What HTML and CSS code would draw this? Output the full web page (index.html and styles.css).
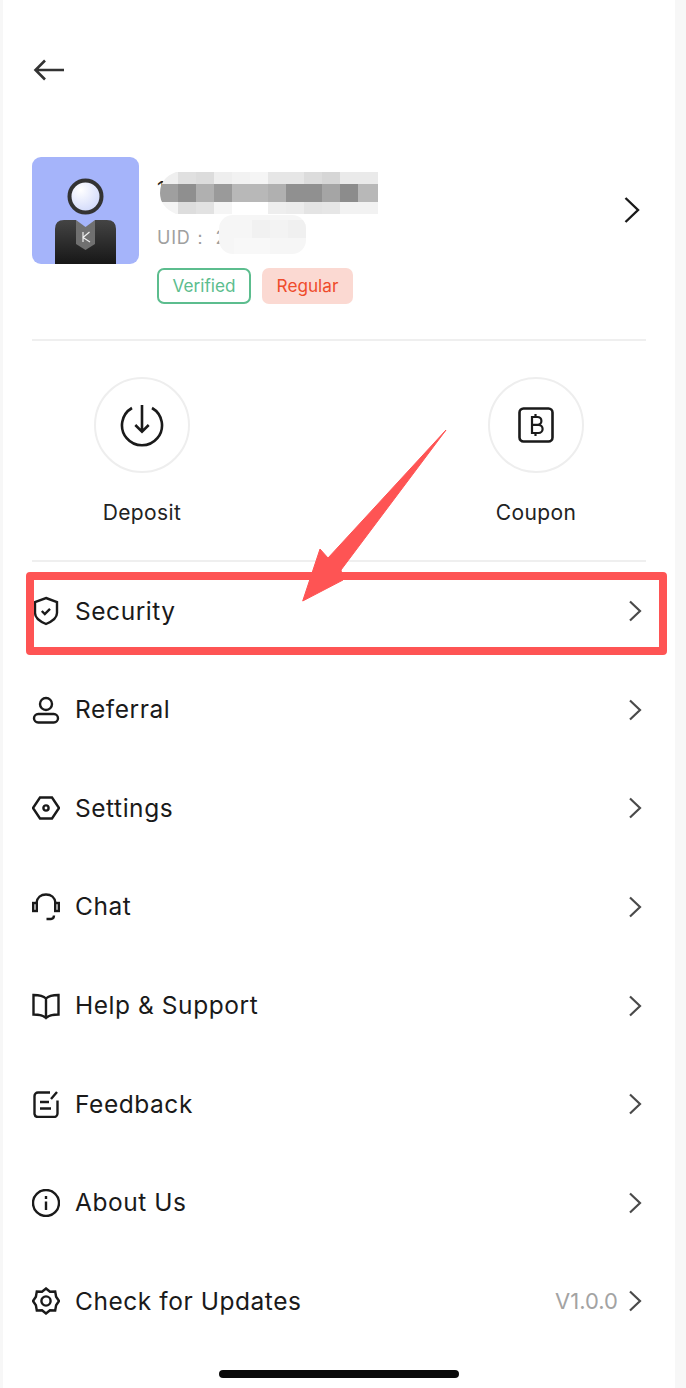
FILE: index.html
```html
<!DOCTYPE html>
<html lang="en">
<head>
<meta charset="utf-8">
<title>Profile</title>
<link rel="stylesheet" href="styles.css">
</head>
<body>
<main class="panel">
  <header class="topbar">
    <svg class="back" width="32" height="24" viewBox="0 0 32 24"><path d="M32 12H4M13 2.500 3.500 12l9.500 9.500"/></svg>
  </header>

  <section class="profile">
    <svg class="avatar" width="107" height="107" viewBox="0 0 107 107">
      <defs>
        <linearGradient id="suit" x1="0" y1="0" x2="0" y2="1"><stop offset="0" stop-color="#444"/><stop offset="1" stop-color="#171717"/></linearGradient>
        <radialGradient id="face" cx=".35" cy=".3" r=".8"><stop offset="0" stop-color="#fff"/><stop offset="1" stop-color="#ccd5fa"/></radialGradient>
      </defs>
      <rect width="107" height="107" rx="9" fill="#a5b4fa"/>
      <circle cx="53.500" cy="39.500" r="16" fill="url(#face)" stroke="#333" stroke-width="4"/>
      <path d="M23 107V72q0-9 9-9h43q9 0 9 9v35z" fill="url(#suit)"/>
      <path d="M44 63h19v24l-9.500 6-9.500-6z" fill="#707070"/>
      <path d="M44 63l9.500 7 9.500-7z" fill="#a5b4fa"/>
      <path d="M51 75v10M57.500 75 51 80.500 58 85" fill="none" stroke="#eee" stroke-width="1.200"/>
    </svg>
    <div class="identity">
      <div class="name-mask">1</div>
      <div class="uid">UID：<span class="uid-value">2</span></div>
      <div class="badges">
        <span class="badge badge-verified">Verified</span>
        <span class="badge badge-regular">Regular</span>
      </div>
    </div>
    <svg class="chev-big" width="18" height="28" viewBox="0 0 18 28"><path d="M2.500 2 15 14 2.500 26"/></svg>
  </section>

  <section class="actions">
    <div class="action">
      <div class="circle">
        <svg class="ico-action" width="44" height="44" viewBox="0 0 44 44"><path d="M12 5a20 20 0 1 0 20 0M22 2v26.600M15.300 22l6.700 6.600 6.700-6.600"/></svg>
      </div>
      <span class="action-label">Deposit</span>
    </div>
    <div class="action">
      <div class="circle">
        <svg class="ico-action" width="38" height="38" viewBox="0 0 38 38"><rect x="2.500" y="2.500" width="33" height="33" rx="4"/><path d="M15 11h5.500a3.800 3.800 0 0 1 0 7.800H15h6.500a4 4 0 0 1 0 8.200H15zM15 11v16M18.500 8v3M18.500 27v3" stroke-width="2.200"/></svg>
      </div>
      <span class="action-label">Coupon</span>
    </div>
  </section>

  <nav class="menu">
    <a class="row">
      <svg class="ico" width="28" height="30" viewBox="0 0 28 30"><path d="M14 2 25 6v11c0 5-5 8.500-11 11C8 25.500 3 22 3 17V6z"/><path d="M9.800 15l3 3 5.200-5.200"/></svg>
      <span class="label">Security</span>
      <svg class="chev" width="14" height="22" viewBox="0 0 14 22"><path d="M2 1.500 12 11 2 20.500"/></svg>
    </a>
    <a class="row">
      <svg class="ico" width="28" height="28" viewBox="0 0 28 28"><circle cx="14" cy="8" r="6"/><rect x="2" y="18" width="24" height="8.500" rx="4.200"/></svg>
      <span class="label">Referral</span>
      <svg class="chev" width="14" height="22" viewBox="0 0 14 22"><path d="M2 1.500 12 11 2 20.500"/></svg>
    </a>
    <a class="row">
      <svg class="ico" width="28" height="28" viewBox="0 0 28 28"><path d="M8 3.500h12L27 14l-7 10.500H8L1 14z"/><circle cx="14" cy="14" r="2.600"/></svg>
      <span class="label">Settings</span>
      <svg class="chev" width="14" height="22" viewBox="0 0 14 22"><path d="M2 1.500 12 11 2 20.500"/></svg>
    </a>
    <a class="row">
      <svg class="ico" width="28" height="28" viewBox="0 0 28 28"><path d="M4.500 10C5 4.500 9 1.500 14 1.500S23 4.500 23.500 10M14.500 26H19c2 0 2.800-1 3-3.500"/><rect x="1.200" y="10" width="3.600" height="8"/><rect x="23.200" y="10" width="3.600" height="8"/></svg>
      <span class="label">Chat</span>
      <svg class="chev" width="14" height="22" viewBox="0 0 14 22"><path d="M2 1.500 12 11 2 20.500"/></svg>
    </a>
    <a class="row">
      <svg class="ico" width="28" height="28" viewBox="0 0 28 28"><path d="M14 6.500C11 3.500 7 3 1.500 3v19.500c5.500 0 9.500.5 12.500 3.500 3-3 7-3.500 12.500-3.500V3C21 3 17 3.500 14 6.500zM14 6.500V26"/></svg>
      <span class="label">Help &amp; Support</span>
      <svg class="chev" width="14" height="22" viewBox="0 0 14 22"><path d="M2 1.500 12 11 2 20.500"/></svg>
    </a>
    <a class="row">
      <svg class="ico" width="28" height="28" viewBox="0 0 28 28"><path d="M18 2.500H6a3.500 3.500 0 0 0-3.500 3.500v18A3.500 3.500 0 0 0 6 27h16a3.500 3.500 0 0 0 3.500-3.500V10.500M8 12h9M8 18.500h11M19 9l6-7"/></svg>
      <span class="label">Feedback</span>
      <svg class="chev" width="14" height="22" viewBox="0 0 14 22"><path d="M2 1.500 12 11 2 20.500"/></svg>
    </a>
    <a class="row">
      <svg class="ico" width="28" height="28" viewBox="0 0 28 28"><circle cx="14" cy="14" r="13"/><path d="M14 12.500V21M14 7v3"/></svg>
      <span class="label">About Us</span>
      <svg class="chev" width="14" height="22" viewBox="0 0 14 22"><path d="M2 1.500 12 11 2 20.500"/></svg>
    </a>
    <a class="row">
      <svg class="ico" width="28" height="28" viewBox="0 0 28 28"><path d="M14 1.500l4 3.300 5.200-.2.900 5.100L27 14l-2.900 4.300-.9 5.100-5.200-.2-4 3.300-4-3.300-5.200.2-.9-5.100L1 14l2.900-4.300.9-5.100 5.200.2z"/><circle cx="14" cy="14" r="4.600"/></svg>
      <span class="label">Check for Updates</span>
      <span class="version">V1.0.0</span>
      <svg class="chev" width="14" height="22" viewBox="0 0 14 22"><path d="M2 1.500 12 11 2 20.500"/></svg>
    </a>
  </nav>

  <div class="home-bar"></div>
</main>

<svg class="mosaic" width="686" height="1388" viewBox="0 0 686 1388" aria-hidden="true">
  <defs>
    <clipPath id="nameclip"><path d="M176 172H378V238L322 232 320 214 176 214Q160 207 160 193 160 178 176 172z"/></clipPath>
    <clipPath id="uidclip"><rect x="219" y="215" width="87" height="39" rx="14"/></clipPath>
  </defs>
  <g clip-path="url(#uidclip)">
    <rect x="216" y="214" width="90" height="40" fill="#f6f6f6"/>
    <rect x="252" y="220" width="18" height="18" fill="#f1f1f1"/>
    <rect x="270" y="220" width="18" height="18" fill="#f3f3f3"/>
    <rect x="288" y="220" width="18" height="18" fill="#f0f0f0"/>
    <rect x="234" y="238" width="36" height="16" fill="#f8f8f8"/>
  </g>
  <g clip-path="url(#nameclip)">
    <rect x="160" y="172" width="18" height="12" fill="#efefef"/><rect x="178" y="172" width="18" height="12" fill="#e0e0e0"/><rect x="196" y="172" width="18" height="12" fill="#dcdcdc"/><rect x="214" y="172" width="18" height="12" fill="#eeeeee"/><rect x="232" y="172" width="18" height="12" fill="#f2f2f2"/><rect x="250" y="172" width="18" height="12" fill="#f5f5f5"/><rect x="268" y="172" width="18" height="12" fill="#e6e6e6"/><rect x="286" y="172" width="18" height="12" fill="#e6e6e6"/><rect x="304" y="172" width="18" height="12" fill="#dcdcdc"/><rect x="322" y="172" width="18" height="12" fill="#d6d6d6"/><rect x="340" y="172" width="18" height="12" fill="#eaeaea"/><rect x="358" y="172" width="20" height="12" fill="#eaeaea"/>
    <rect x="160" y="184" width="18" height="18" fill="#9f9f9f"/><rect x="178" y="184" width="18" height="18" fill="#8f8f8f"/><rect x="196" y="184" width="18" height="18" fill="#b0b0b0"/><rect x="214" y="184" width="18" height="18" fill="#9a9a9a"/><rect x="232" y="184" width="18" height="18" fill="#b8b8b8"/><rect x="250" y="184" width="18" height="18" fill="#b8b8b8"/><rect x="268" y="184" width="18" height="18" fill="#b0b0b0"/><rect x="286" y="184" width="18" height="18" fill="#909090"/><rect x="304" y="184" width="18" height="18" fill="#909090"/><rect x="322" y="184" width="18" height="18" fill="#a5a5a5"/><rect x="340" y="184" width="18" height="18" fill="#8c8c8c"/><rect x="358" y="184" width="20" height="18" fill="#b8b8b8"/>
    <rect x="160" y="202" width="18" height="12" fill="#f4f4f4"/><rect x="178" y="202" width="18" height="12" fill="#dddddd"/><rect x="196" y="202" width="18" height="12" fill="#e2e2e2"/><rect x="214" y="202" width="18" height="12" fill="#f5f5f5"/><rect x="232" y="202" width="36" height="12" fill="#ffffff"/><rect x="268" y="202" width="18" height="12" fill="#eeeeee"/><rect x="286" y="202" width="18" height="12" fill="#ececec"/><rect x="304" y="202" width="18" height="12" fill="#e4e4e4"/><rect x="322" y="202" width="18" height="12" fill="#e6e6e6"/><rect x="340" y="202" width="38" height="12" fill="#f2f2f2"/>
  </g>
</svg>

<div class="callout-box"></div>
<svg class="callout-arrow" width="160" height="190" viewBox="0 0 160 190" aria-hidden="true">
  <path d="M146 1 28 129 20 120 2.700 172 43 151 41 141z" fill="#fe5454" stroke="#fe5454" stroke-linejoin="round"/>
</svg>
</body>
</html>
```

FILE: styles.css
```css
* { box-sizing: border-box; }
html, body { margin: 0; padding: 0; }
body {
  position: relative;
  width: 686px;
  height: 1388px;
  overflow: hidden;
  background: #f7f7f7;
  font-family: Inter, "Liberation Sans", sans-serif;
  color: #1a1a1a;
}
.panel {
  width: 672px;
  height: 1388px;
  margin-left: 3px;
  padding: 0 29px;
  background: #fff;
  position: relative;
}
.topbar { height: 157px; padding-top: 58px; }
.back { display: block; fill: none; stroke: #333; stroke-width: 2.600; }
.profile {
  display: flex;
  align-items: flex-start;
  height: 184px;
  border-bottom: 2px solid #efefef;
}
.avatar { flex: none; display: block; }
.identity { margin-left: 18px; flex: 1; }
.name-mask { height: 64px; padding-top: 20px; font-size: 20px; line-height: 24px; color: #222; }
.uid { height: 47px; font-size: 18px; line-height: 33px; color: #a0a0a0; letter-spacing: .8px; }
.uid-value { margin-left: 6px; }
.badges { display: flex; gap: 11px; }
.badge {
  height: 36px;
  border-radius: 7px;
  font-size: 17.200px;
  line-height: 36px;
  text-align: center;
}
.badge-verified { width: 94px; border: 2px solid #5cbd8e; line-height: 32px; color: #5cbd8e; }
.badge-regular { width: 91px; background: #fbd9d2; color: #ef4c2b; }
.chev-big { margin: 39px 5px 0 0; fill: none; stroke: #1a1a1a; stroke-width: 2.400; }
.actions {
  display: flex;
  justify-content: space-between;
  height: 221px;
  padding: 36px 62px 0;
  border-bottom: 2px solid #efefef;
}
.action { width: 96px; display: flex; flex-direction: column; align-items: center; }
.circle {
  width: 96px;
  height: 96px;
  border: 2px solid #eeeeee;
  border-radius: 50%;
  display: flex;
  align-items: center;
  justify-content: center;
}
.ico-action { fill: none; stroke: #1a1a1a; stroke-width: 2.600; }
.action-label { margin-top: 26px; font-size: 21px; line-height: 28px; white-space: nowrap; color: #222; letter-spacing: .4px; }
.menu { display: flex; flex-direction: column; }
.row { display: flex; align-items: center; height: 98.570px; }
.ico { flex: none; fill: none; stroke: #1a1a1a; stroke-width: 2.400; }
.label { margin-left: 15px; flex: 1; padding-bottom: 1px; font-size: 24.500px; line-height: 30px; letter-spacing: .55px; color: #1a1a1a; }
.version { margin-right: 10px; padding-bottom: 1px; font-size: 22px; color: #a3a3a3; }
.chev { flex: none; margin-right: 4px; fill: none; stroke: #4a4a4a; stroke-width: 2.200; }
.home-bar {
  position: absolute;
  left: 216px;
  top: 1370px;
  width: 240px;
  height: 8px;
  border-radius: 4px;
  background: #0a0a0a;
}
.mosaic { position: absolute; left: 0; top: 0; pointer-events: none; }
.callout-box {
  position: absolute;
  left: 26px;
  top: 572px;
  width: 641px;
  height: 83px;
  border: 8px solid #fe5454;
  border-radius: 4px;
}
.callout-arrow { position: absolute; left: 300px; top: 429px; }
```
